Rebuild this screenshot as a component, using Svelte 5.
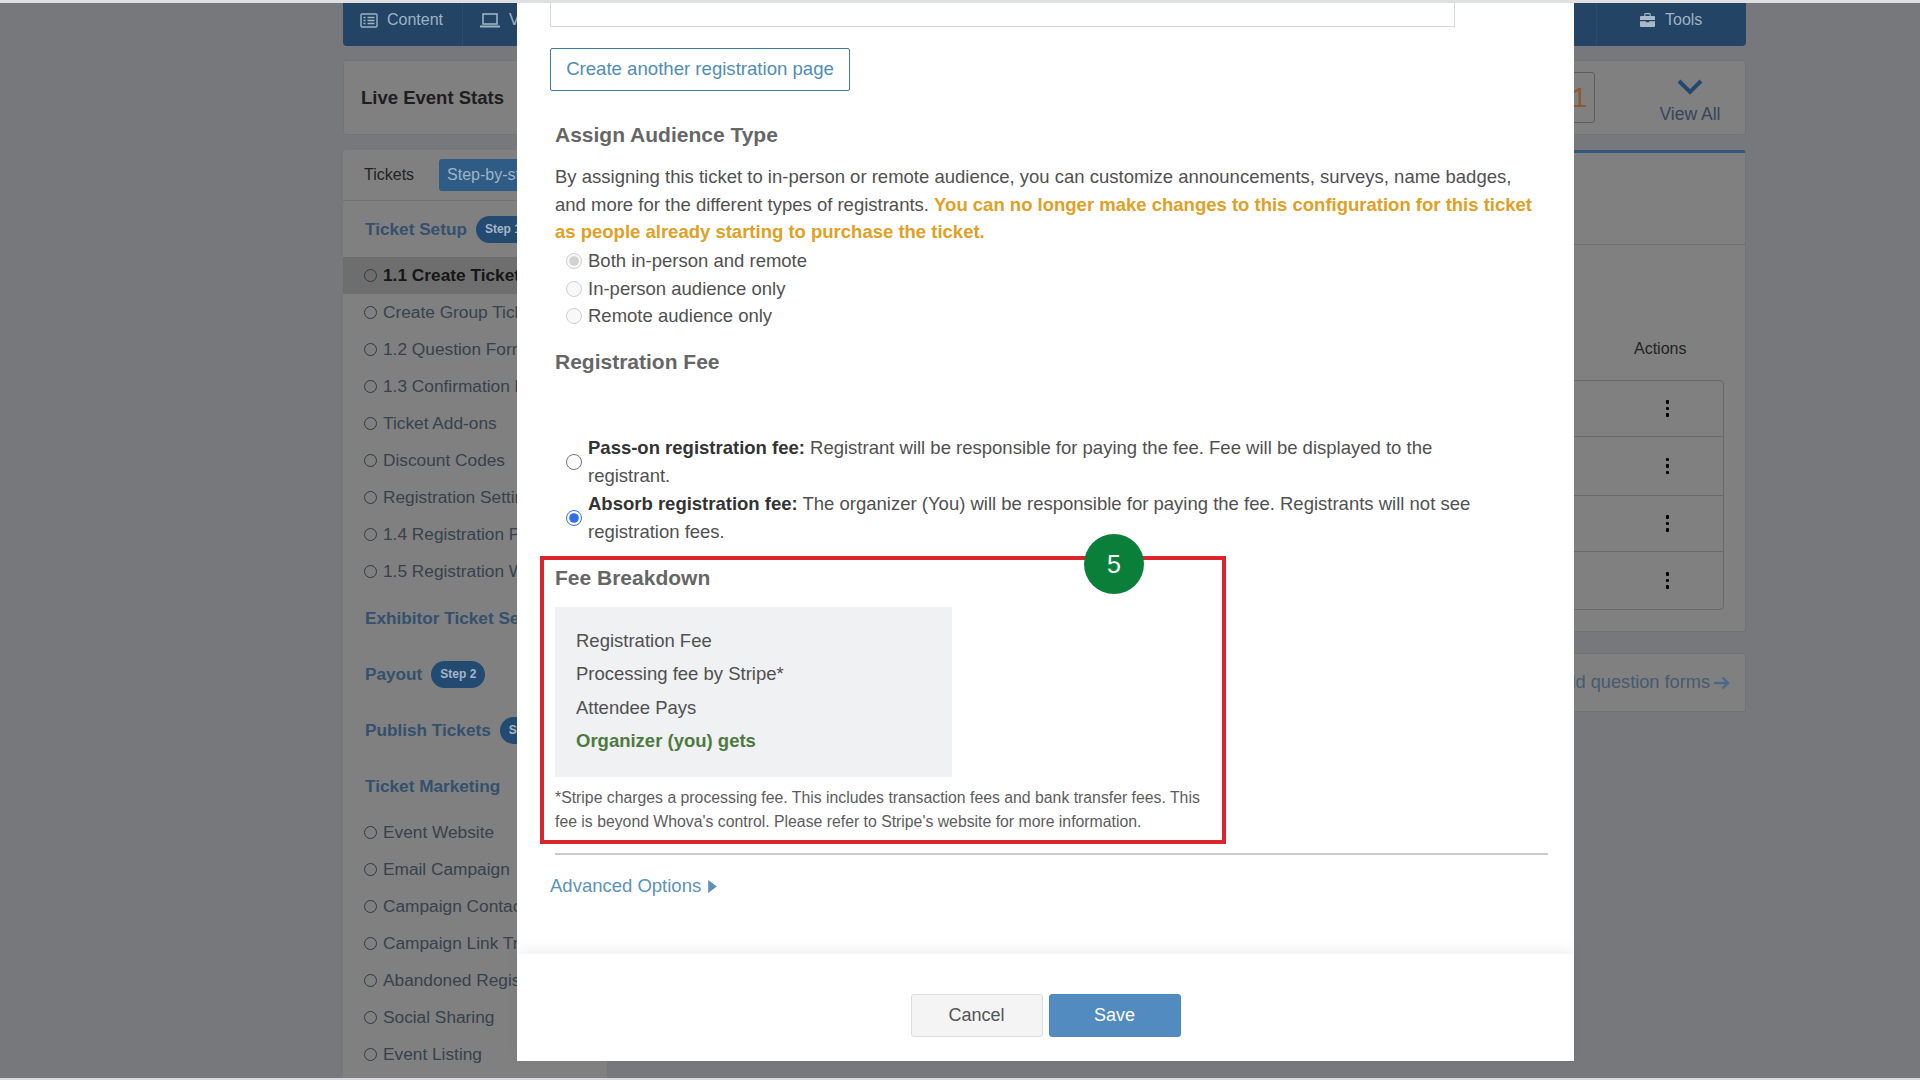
<script>
  const setup = ['Create Group Tickets','1.2 Question Forms','1.3 Confirmation Email','Ticket Add-ons','Discount Codes','Registration Settings','1.4 Registration Page','1.5 Registration Widget'];
  const marketing = ['Event Website','Email Campaign','Campaign Contacts','Campaign Link Tracking','Abandoned Registration','Social Sharing','Event Listing'];
  const rows = [56, 59, 56, 57];
  const fees = ['Registration Fee','Processing fee by Stripe*','Attendee Pays'];
</script>

<div class="page">
  <div class="topline"></div>
  <div class="shell">
    <header class="nav">
      <div class="tab first">
        <svg width="18" height="15" viewBox="0 0 18 15" fill="none" stroke="#9fb2c4" stroke-width="1.4"><rect x="1" y="1" width="16" height="13" rx="1"/><path d="M3.5 4.5h2M3.5 7.5h2M3.5 10.5h2M7.5 4.5h7M7.5 7.5h7M7.5 10.5h7"/></svg>
        <span>Content</span>
      </div>
      <div class="tab second">
        <svg width="20" height="15" viewBox="0 0 20 15" fill="none" stroke="#9fb2c4" stroke-width="1.6"><rect x="3" y="1" width="14" height="10"/><path d="M0 13.5h20" stroke-width="2"/></svg>
        <span>View</span>
      </div>
      <div class="spacer"></div>
      <div class="tab tools">
        <svg width="15" height="14" viewBox="0 0 14 14" fill="#a9b9c9" preserveAspectRatio="none"><path d="M5 0h4a1 1 0 0 1 1 1v2h3a1 1 0 0 1 1 1v3H0V4a1 1 0 0 1 1-1h3V1a1 1 0 0 1 1-1zm0 1.2V3h4V1.200zM0 8.200h5.500v1h3v-1H14V13a1 1 0 0 1-1 1H1a1 1 0 0 1-1-1z"/></svg>
        <span>Tools</span>
      </div>
    </header>

    <section class="stats">
      <b>Live Event Stats</b>
      <div class="stats-right">
        <div class="count">1</div>
        <div class="viewall">
          <svg width="26" height="16" viewBox="0 0 26 16" fill="none" stroke="#234a6e" stroke-width="4"><path d="M2 2l11 11L24 2"/></svg>
          <span>View All</span>
        </div>
      </div>
    </section>

    <div class="columns">
      <aside class="side">
        <div class="side-tabs"><span>Tickets</span><span class="stepbtn">Step-by-step</span></div>
        <div class="head"><b>Ticket Setup</b><i class="pill">Step 1</i></div>
        <div class="item sel"><em></em>1.1 Create Tickets</div>
        {#each setup as s}<div class="item"><em></em>{s}</div>{/each}
        <div class="head"><b>Exhibitor Ticket Setup</b></div>
        <div class="head"><b>Payout</b><i class="pill">Step 2</i></div>
        <div class="head"><b>Publish Tickets</b><i class="pill">Step 3</i></div>
        <div class="head"><b>Ticket Marketing</b></div>
        {#each marketing as s}<div class="item"><em></em>{s}</div>{/each}
      </aside>
      <div class="main">
        <div class="panel">
          <div class="panel-top"></div>
          <div class="actions-label">Actions</div>
          <div class="table">
            {#each rows as h}
              <div class="row" style="height:{h}px"><span class="dots"><i></i><i></i><i></i></span></div>
            {/each}
          </div>
        </div>
        <div class="addq">
          <span>Add question forms</span>
          <svg width="16" height="14" viewBox="0 0 16 14" fill="none" stroke="#4a6a8a" stroke-width="2.4"><path d="M0 7h14M8.500 1.500L14 7l-5.500 5.500"/></svg>
        </div>
      </div>
    </div>
  </div>
  <div class="bottomline"></div>

  <div class="modal">
    <div class="body">
      <div class="field"></div>
      <button class="another">Create another registration page</button>
      <h3 class="h-audience">Assign Audience Type</h3>
      <p class="para">By assigning this ticket to in-person or remote audience, you can customize announcements, surveys, name badges, and more for the different types of registrants. <b>You can no longer make changes to this configuration for this ticket as people already starting to purchase the ticket.</b></p>
      <label class="opt"><input type="radio" name="aud" checked disabled /><span>Both in-person and remote</span></label>
      <label class="opt"><input type="radio" name="aud" disabled /><span>In-person audience only</span></label>
      <label class="opt"><input type="radio" name="aud" disabled /><span>Remote audience only</span></label>
      <h3 class="h-fee">Registration Fee</h3>
      <label class="fee first-fee"><input type="radio" name="fee" /><span><b>Pass-on registration fee:</b> Registrant will be responsible for paying the fee. Fee will be displayed to the registrant.</span></label>
      <label class="fee"><input type="radio" name="fee" checked /><span><b>Absorb registration fee:</b> The organizer (You) will be responsible for paying the fee. Registrants will not see registration fees.</span></label>

      <section class="annot">
        <div class="marker">5</div>
        <h3>Fee Breakdown</h3>
        <div class="breakdown">
          {#each fees as f}<div>{f}</div>{/each}
          <div class="gets">Organizer (you) gets</div>
        </div>
        <p class="note">*Stripe charges a processing fee. This includes transaction fees and bank transfer fees. This fee is beyond Whova's control. Please refer to Stripe's website for more information.</p>
      </section>

      <div class="rule"></div>
      <div class="advanced">Advanced Options <svg width="9" height="13" viewBox="0 0 8 12" fill="#5b93b8"><path d="M0 0l8 6-8 6z"/></svg></div>
    </div>
    <footer class="foot">
      <button class="cancel">Cancel</button>
      <button class="save">Save</button>
    </footer>
  </div>
</div>

<style>
  :global(body) { margin: 0; background: #77787c; }
  .page {
    width: 1920px; height: 1080px; position: relative; overflow: hidden;
    display: flex; flex-direction: column; background: #77787c;
    font-family: "Liberation Sans", Arial, sans-serif; color: #333;
  }
  .topline { height: 3px; background: #dfe0e1; flex: none; }
  .bottomline { height: 2px; background: #d9d9e0; flex: none; }
  .shell { flex: 1; min-height: 0; margin-left: 343px; width: 1403px; display: flex; flex-direction: column; }

  .nav { height: 43px; flex: none; background: #234464; border-radius: 0 0 4px 4px; display: flex; color: #9fb2c4; font-size: 16px; }
  .tab { display: flex; align-items: center; gap: 9px; height: 34px; }
  .first { width: 120px; padding-left: 17px; box-sizing: border-box; border-right: 1px solid #2a4c6d; height: 43px; padding-bottom: 9px; }
  .second { padding-left: 17px; height: 43px; padding-bottom: 9px; box-sizing: border-box; }
  .spacer { flex: 1; }
  .tools { width: 150px; box-sizing: border-box; padding-left: 43px; gap: 10px; height: 43px; padding-bottom: 9px; border-left: 1px solid #2a4c6d; }

  .stats {
    height: 75px; margin-top: 14px; flex: none; box-sizing: border-box; background: #808080;
    border: 1px solid #727375; border-radius: 3px; display: flex; align-items: center;
    justify-content: space-between; padding-left: 17px; color: #1e1e1e; font-size: 18.500px;
  }
  .stats-right { display: flex; align-items: center; }
  .count { width: 60px; height: 51px; box-sizing: border-box; border: 1px solid #5c5d5f; border-radius: 3px; color: #8a5a30; font-size: 28px; line-height: 49px; text-align: right; padding-right: 7px; margin-right: 38px; }
  .viewall { width: 112px; display: flex; flex-direction: column; align-items: center; gap: 9px; color: #35465a; font-size: 17.500px; padding-top: 8px; padding-left: 2px; box-sizing: border-box; }

  .columns { flex: 1; min-height: 0; margin-top: 15px; display: flex; align-items: flex-start; }
  .side { width: 264px; height: 100%; flex: none; box-sizing: border-box; background: #808080; border-radius: 3px 0 0 0; overflow: hidden; white-space: nowrap; }
  .side-tabs { height: 51px; box-sizing: border-box; border-bottom: 1px solid #727375; display: flex; align-items: center; padding-left: 21px; gap: 25px; color: #232323; font-size: 16px; }
  .stepbtn { height: 32px; line-height: 32px; background: #2f5c85; color: #9fb3c6; padding: 0 8px; border-radius: 3px; }
  .head { height: 56px; display: flex; align-items: center; padding-left: 22px; gap: 9px; color: #33506e; font-size: 17.200px; }
  .pill { font-style: normal; font-weight: 700; font-size: 12px; background: #234a70; color: #a3b6c8; height: 27px; line-height: 27px; padding: 0 9px; border-radius: 14px; }
  .item { height: 37px; display: flex; align-items: center; padding-left: 21px; gap: 6px; font-size: 17.300px; color: #37424c; }
  .item em { width: 13px; height: 13px; box-sizing: border-box; border: 1.500px solid #2f3a44; border-radius: 50%; flex: none; }
  .sel { background: #6e6e6e; color: #161616; font-weight: 700; }

  .main { flex: 1; min-width: 0; display: flex; flex-direction: column; }
  .panel { height: 482px; box-sizing: border-box; background: #808080; border-top: 3px solid #33587c; border-right: 1px solid #727375; border-bottom: 1px solid #727375; border-radius: 0 3px 3px 0; display: flex; flex-direction: column; }
  .panel-top { height: 91px; flex: none; border-bottom: 1px solid #6e6f71; }
  .actions-label { margin-top: 94px; padding-left: 1027px; height: 20px; line-height: 20px; font-size: 16px; color: #232323; }
  .table { margin-top: 21px; margin-right: 21px; box-sizing: border-box; border: 1px solid #68696b; border-radius: 4px; }
  .row { display: flex; align-items: center; justify-content: flex-end; padding-right: 54px; box-sizing: border-box; border-bottom: 1px solid #68696b; }
  .row:last-child { border-bottom: 0; }
  .dots { display: flex; flex-direction: column; gap: 3px; }
  .dots i { width: 3.500px; height: 3.500px; background: #000; border-radius: 1px; display: block; }
  .addq { height: 59px; margin-top: 21px; box-sizing: border-box; background: #808080; border: 1px solid #727375; display: flex; align-items: center; justify-content: flex-end; gap: 4px; padding-right: 15px; color: #465a70; font-size: 18.200px; }

  .modal { position: absolute; left: 517px; top: 3px; width: 1057px; height: 1058px; background: #fff; display: flex; flex-direction: column; }
  .body { flex: 1; min-height: 0; padding-left: 33px; position: relative; }
  .field { width: 905px; height: 24px; box-sizing: border-box; border: 1px solid #d8d8d8; border-top: 0; }
  .another { display: block; margin-top: 21px; width: 300px; height: 43px; background: #fff; border: 1.500px solid #3f7ea3; border-radius: 2px; color: #4f8db3; font: 18.600px "Liberation Sans", Arial, sans-serif; padding: 0 0 2px; }
  h3 { margin: 0 0 0 5px; font-size: 21px; line-height: 28px; color: #666; font-weight: 700; }
  .h-audience { margin-top: 30px; }
  .h-fee { margin-top: 18px; }
  .para { margin: 14px 0 2px 5px; width: 985px; font-size: 18.500px; line-height: 27.500px; color: #505050; }
  .para b { color: #e0a024; }
  .opt, .fee { display: flex; align-items: center; margin-left: 16px; font-size: 18.500px; line-height: 28px; color: #505050; }
  .opt { height: 27.500px; }
  input { width: 16px; height: 16px; margin: 0 6px 0 0; flex: none; accent-color: #2f6fe8; }
  .fee { width: 934px; }
  .fee b { color: #333; }
  .first-fee { margin-top: 58px; }

  .annot { position: relative; margin: 10px 0 0 -10px; width: 686px; height: 288px; box-sizing: border-box; border: 4px solid #d9252b; padding: 4px 0 0 11px; }
  .annot h3 { margin-left: 0; }
  .marker { position: absolute; left: 540px; top: -26px; width: 60px; height: 60px; border-radius: 50%; background: #0a7f3a; color: #fff; font-size: 25px; line-height: 60px; text-align: center; }
  .breakdown { margin-top: 15px; width: 397px; height: 170px; box-sizing: border-box; background: #eff1f3; padding: 17px 0 0 21px; font-size: 18.500px; line-height: 33.300px; color: #505050; }
  .gets { color: #4d7a3e; font-weight: 700; }
  .note { margin: 9px 0 0; width: 660px; font-size: 15.800px; line-height: 24px; color: #5c5c5c; }

  .rule { margin: 9px 0 0 5px; width: 993px; height: 2px; background: #cbcbcb; }
  .advanced { margin-top: 17px; line-height: 28px; font-size: 18.500px; color: #5b93b8; display: flex; align-items: center; gap: 7px; }

  .foot { height: 107px; flex: none; box-sizing: border-box; padding-top: 40px; display: flex; justify-content: center; gap: 6px; background: #fff; box-shadow: 0 -6px 12px rgba(0, 0, 0, .05); position: relative; }
  .foot button { width: 132px; height: 43px; font: 18px "Liberation Sans", Arial, sans-serif; border-radius: 3px; padding: 0; }
  .cancel { background: #f4f4f4; border: 1px solid #dedede; color: #555; }
  .save { background: #528bbf; border: 1px solid #4f87b9; color: #fff; font-weight: 400; }
</style>
